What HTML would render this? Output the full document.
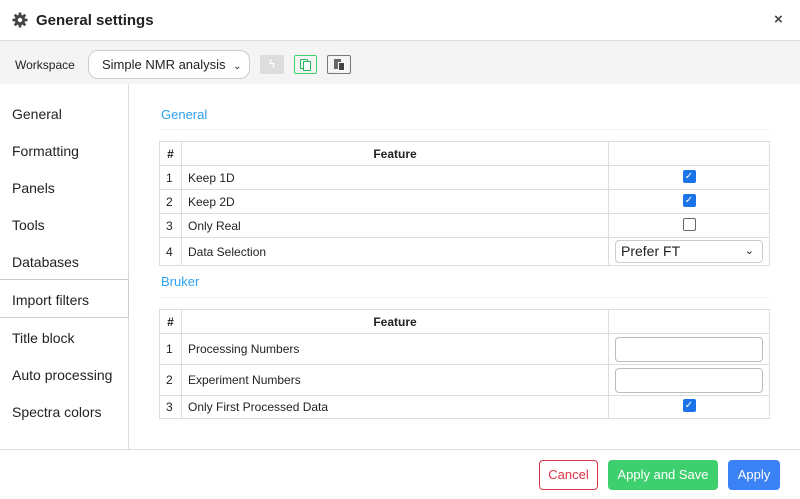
<!DOCTYPE html>
<html><head><style>
*{box-sizing:border-box;margin:0;padding:0}
body{width:800px;height:499px;background:#fff;font-family:"Liberation Sans",sans-serif;color:#222;position:relative;overflow:hidden;font-size:13px}
.a{position:absolute}
.side{left:12px;font-size:14px;color:#222}
table{position:absolute;left:159px;width:611px;border-collapse:collapse;font-size:12px}
td,th{border:1px solid #ddd;padding:0 6px}
th{font-weight:bold;height:24px}
.cb{display:inline-block;width:13px;height:13px;border-radius:2px;vertical-align:middle;position:relative;top:-2px}
.on{background:#1a73e8;color:#fff;font-size:10px;line-height:13px;text-align:center}
.off{border:1px solid #666;background:#fff}
.inp{width:148px;height:25px;border:1px solid #bbb;border-radius:4px;background:#fff}
.btn{position:absolute;top:460px;height:30px;border-radius:4px;font-size:13px;line-height:30px;text-align:center;color:#fff}
</style></head><body>
<svg class="a" style="left:12px;top:12px" width="16" height="16" viewBox="0 0 16 16"><g fill="#444"><circle cx="8" cy="8" r="5.2"/><rect x="6.6" y="0.5" width="2.8" height="15" rx="0.6"/><rect x="6.6" y="0.5" width="2.8" height="15" rx="0.6" transform="rotate(45 8 8)"/><rect x="6.6" y="0.5" width="2.8" height="15" rx="0.6" transform="rotate(90 8 8)"/><rect x="6.6" y="0.5" width="2.8" height="15" rx="0.6" transform="rotate(135 8 8)"/></g><circle cx="8" cy="8" r="2.2" fill="#fff"/></svg>
<div class="a" style="left:36px;top:12px;font-size:15px;font-weight:bold;color:#222">General settings</div>
<div class="a" style="left:774px;top:11px;font-size:15px;font-weight:bold;color:#444">×</div>
<div class="a" style="left:0;top:40px;width:800px;height:44px;background:#f4f4f4;border-top:1px solid #ddd"></div>
<div class="a" style="left:15px;top:58px;font-size:12px">Workspace</div>
<div class="a" style="left:88px;top:50px;width:162px;height:29px;border:1px solid #ccc;border-radius:10px;background:#fff;font-size:13px;line-height:27px;padding-left:13px">Simple NMR analysis <span style="font-size:10px;margin-left:4px">⌄</span></div>
<div class="a" style="left:260px;top:55px;width:24px;height:19px;background:#ddd;border-radius:2px;color:#fff;text-align:center;font-size:12px;line-height:19px">ϟ</div>
<div class="a" style="left:294px;top:55px;width:23px;height:19px;border:1px solid #3ecf6e;border-radius:2px"><div class="a" style="left:5px;top:3px;width:8px;height:10px;border:1.5px solid #2bb55a;border-radius:1px"></div><div class="a" style="left:8px;top:5px;width:8px;height:10px;border:1.5px solid #2bb55a;border-radius:1px;background:#fff"></div></div>
<div class="a" style="left:327px;top:55px;width:24px;height:19px;border:1px solid #777;border-radius:2px"><div class="a" style="left:6px;top:3px;width:7px;height:10px;background:#666"></div><div class="a" style="left:10px;top:6px;width:7px;height:9px;background:#444;border:1px solid #fff"></div></div>
<div class="a" style="left:128px;top:84px;width:1px;height:365px;background:#ddd"></div>
<div class="a side" style="top:106px">General</div>
<div class="a side" style="top:143px">Formatting</div>
<div class="a side" style="top:180px">Panels</div>
<div class="a side" style="top:217px">Tools</div>
<div class="a side" style="top:254px">Databases</div>
<div class="a" style="left:0;top:279px;width:129px;height:39px;border:1px solid #ccc;border-left:none;background:#fff"></div>
<div class="a side" style="top:292px">Import filters</div>
<div class="a side" style="top:330px">Title block</div>
<div class="a side" style="top:367px">Auto processing</div>
<div class="a side" style="top:404px">Spectra colors</div>
<div class="a" style="left:161px;top:107px;color:#2ea0f0;font-size:13px">General</div>
<div class="a" style="left:159px;top:129px;width:611px;height:1px;background:#f0f0f0"></div>
<table style="top:141px">
<tr><th style="width:22px;padding:0">#</th><th>Feature</th><th style="width:161px"></th></tr>
<tr style="height:24px"><td>1</td><td>Keep 1D</td><td style="text-align:center"><span class="cb on">✓</span></td></tr>
<tr style="height:24px"><td>2</td><td>Keep 2D</td><td style="text-align:center"><span class="cb on">✓</span></td></tr>
<tr style="height:24px"><td>3</td><td>Only Real</td><td style="text-align:center"><span class="cb off"></span></td></tr>
<tr style="height:28px"><td>4</td><td>Data Selection</td><td><div style="width:148px;height:23px;border:1px solid #ccc;border-radius:4px;font-size:14px;line-height:21px;padding-left:5px;position:relative">Prefer FT<span style="position:absolute;right:8px;font-size:11px">⌄</span></div></td></tr>
</table>
<div class="a" style="left:161px;top:274px;color:#2ea0f0;font-size:13px">Bruker</div>
<div class="a" style="left:159px;top:297px;width:611px;height:1px;background:#f0f0f0"></div>
<table style="top:309px">
<tr><th style="width:22px;padding:0">#</th><th>Feature</th><th style="width:161px"></th></tr>
<tr style="height:31px"><td>1</td><td>Processing Numbers</td><td><div class="inp"></div></td></tr>
<tr style="height:31px"><td>2</td><td>Experiment Numbers</td><td><div class="inp"></div></td></tr>
<tr style="height:23px"><td>3</td><td>Only First Processed Data</td><td style="text-align:center"><span class="cb on">✓</span></td></tr>
</table>
<div class="a" style="left:0;top:449px;width:800px;height:1px;background:#ddd"></div>
<div class="btn" style="left:539px;width:59px;border:1px solid #dc3545;color:#dc3545;line-height:28px">Cancel</div>
<div class="btn" style="left:608px;width:110px;background:#3ecf6e">Apply and Save</div>
<div class="btn" style="left:728px;width:52px;background:#3b82f6">Apply</div>
</body></html>
